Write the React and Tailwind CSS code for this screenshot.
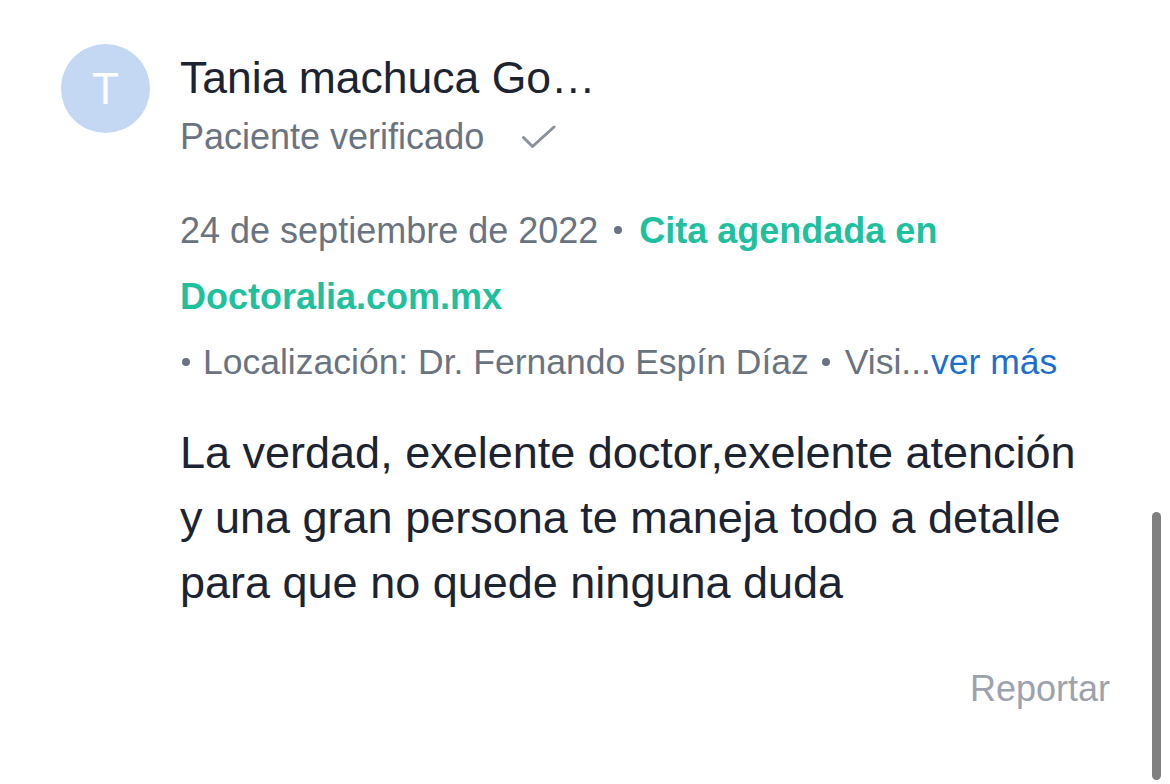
import React from 'react';

const font = { fontFamily: '"Liberation Sans", Arial, sans-serif' };

function CheckMark() {
  return (
    <svg width="34" height="24" viewBox="0 0 34 24" fill="none" className="ml-[38px]">
      <polyline points="1.5,12.5 10.5,21.5 32,2" stroke="#8b919a" strokeWidth="3" strokeLinecap="round" strokeLinejoin="round" />
    </svg>
  );
}

// small middle dot used between the meta items
function Dot({ className = '' }) {
  return <span className={`inline-block align-middle w-[8px] h-[8px] rounded-full bg-[#6a7481] -translate-y-[3px] ${className}`} />;
}

export default function App() {
  return (
    <div className="relative w-[1170px] h-[784px] bg-white overflow-hidden" style={font}>
      <div className="flex pl-[61px] pt-[44px]">
        {/* avatar */}
        <div className="w-[89px] h-[89px] shrink-0 rounded-full bg-[#c5d8f3] flex items-center justify-center text-white text-[44px] font-light leading-none">
          T
        </div>

        <div className="ml-[30px] w-[930px] pt-[8px]">
          <div className="text-[44.5px] leading-[52px] text-[#1c2431]">Tania machuca Go…</div>
          <div className="flex items-center mt-[11px] text-[36px] leading-[44px] text-[#6a7481]">
            <span>Paciente verificado</span>
            <CheckMark />
          </div>

          <div className="mt-[39px] text-[36px] leading-[66px] text-[#6a7481]">
            <div>
              24 de septiembre de 2022
              <Dot className="ml-[16px] mr-[17px]" />
              <span className="font-bold text-[#1fc09e]">Cita agendada en</span>
            </div>
            <div className="font-bold text-[#1fc09e]">Doctoralia.com.mx</div>
            <div className="leading-[64px] text-[35.5px]">
              <Dot className="ml-[2px] mr-[13px]" />
              Localización: Dr. Fernando Espín Díaz
              <Dot className="ml-[13px] mr-[15px]" />
              Visi...<span className="text-[#1c6fce]">ver más</span>
            </div>
          </div>

          <div className="mt-[26px] text-[45px] leading-[65px] text-[#1c2431]">
            <div>La verdad, exelente doctor,exelente atención</div>
            <div>y una gran persona te maneja todo a detalle</div>
            <div>para que no quede ninguna duda</div>
          </div>

          <div className="mt-[52px] text-right text-[36px] leading-[44px] text-[#9ca3ad]">Reportar</div>
        </div>
      </div>

      {/* scroll indicator */}
      <div className="absolute left-[1152px] top-[512px] w-[9px] h-[268px] rounded-full bg-[#808080]" />
    </div>
  );
}
